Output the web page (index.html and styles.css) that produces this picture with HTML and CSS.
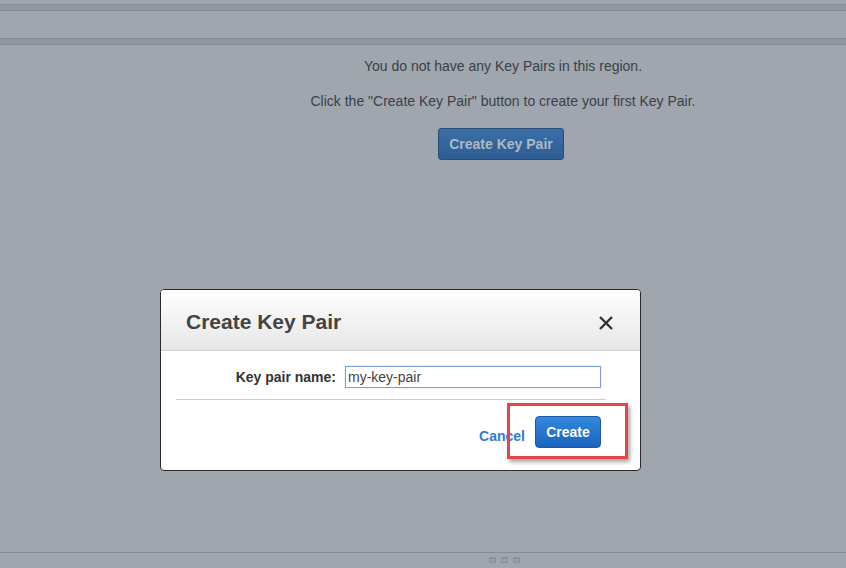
FILE: index.html
```html
<!DOCTYPE html>
<html>
<head>
<meta charset="utf-8">
<link rel="stylesheet" href="styles.css">
</head>
<body>
<div class="page">
  <div class="topgap"></div>
  <div class="band"></div>
  <div class="midgap"></div>
  <div class="band"></div>
  <main class="content">
    <p class="msg first">You do not have any Key Pairs in this region.</p>
    <p class="msg">Click the "Create Key Pair" button to create your first Key Pair.</p>
    <button class="primary-dim">Create Key Pair</button>
  </main>
  <footer class="foot">
    <span class="grip"></span><span class="grip"></span><span class="grip"></span>
  </footer>
</div>

<div class="modal">
  <div class="modal-head">
    <h2 class="modal-title">Create Key Pair</h2>
    <svg class="close" width="14" height="14" viewBox="0 0 14 14"><path d="M1 1L13 13M13 1L1 13" stroke="#333" stroke-width="2.4" fill="none"/></svg>
  </div>
  <div class="modal-body">
    <div class="field">
      <label class="field-label">Key pair name:</label>
      <div class="input">my-key-pair</div>
    </div>
    <div class="sep"></div>
    <div class="actions">
      <a class="cancel">Cancel</a>
      <button class="create">Create</button>
    </div>
  </div>
</div>
<div class="highlight"></div>
</body>
</html>
```

FILE: styles.css
```css
html, body {
  margin: 0;
  padding: 0;
  background: #a0a6ad;
  font-family: "Liberation Sans", Arial, sans-serif;
  width: 846px;
  height: 568px;
  overflow: hidden;
}
.page {
  position: relative;
  height: 568px;
  display: flex;
  flex-direction: column;
}
.topgap { height: 4px; }
.band {
  height: 5px;
  background: #92979f;
  border-top: 1px solid #868b93;
  border-bottom: 1px solid #868b93;
}
.midgap { height: 27px; }
.content {
  margin-left: 160px;
  text-align: center;
  flex: 1;
  padding-top: 13px;
}
.msg {
  margin: 0;
  font-size: 14px;
  color: #3c4047;
  line-height: 17px;
}
.msg.first { margin-bottom: 18px; }
.primary-dim {
  margin-top: 18px;
  margin-right: 4px;
  width: 126px;
  height: 32px;
  border: 1px solid #284e78;
  border-radius: 3px;
  background: linear-gradient(#3a6fa6, #2d5d92);
  color: #aeb8c6;
  font-family: "Liberation Sans", Arial, sans-serif;
  font-weight: bold;
  font-size: 14px;
  padding: 0;
}
.foot {
  border-top: 1px solid #878c94;
  display: flex;
  justify-content: center;
  gap: 5px;
  padding-top: 4px;
  padding-left: 162px;
  box-sizing: border-box;
  height: 16px;
}
.grip {
  width: 5px;
  height: 3px;
  border: 1px solid #8a8f97;
  border-top-width: 2px;
  border-radius: 1px;
  background: #9a9fa7;
}
.modal {
  position: absolute;
  left: 160px;
  top: 289px;
  width: 479px;
  height: 180px;
  background: #fff;
  border: 1px solid #2a2a2a;
  border-radius: 4px;
  overflow: hidden;
}
.modal-head {
  height: 60px;
  background: linear-gradient(#ffffff, #e6e6e6);
  border-bottom: 1px solid #cfcfcf;
  display: flex;
  align-items: center;
  justify-content: space-between;
  padding: 0 27px 0 25px;
}
.modal-title {
  margin: 4px 0 0 0;
  font-size: 21px;
  font-weight: bold;
  color: #444;
}
.close { margin-top: 6px; }
.modal-body {
  padding: 15px 34px 0 15px;
}
.field {
  display: flex;
  align-items: center;
  gap: 9px;
}
.field-label {
  width: 160px;
  text-align: right;
  font-size: 14px;
  font-weight: bold;
  color: #333;
}
.input {
  width: 252px;
  height: 20px;
  border: 1px solid #7c9fdc;
  box-shadow: 0 0 1px #9ab8ea;
  font-size: 14px;
  color: #444;
  padding-left: 2px;
  line-height: 20px;
}
.sep {
  margin-top: 11px;
  height: 1px;
  background: #cccccc;
}
.actions {
  display: flex;
  justify-content: flex-end;
  align-items: center;
  gap: 10px;
  margin-top: 16px;
  padding-right: 5px;
}
.cancel {
  font-size: 14px;
  font-weight: bold;
  color: #2f7bd6;
  margin-top: 8px;
}
.create {
  width: 66px;
  height: 32px;
  border: 1px solid #1a5aa5;
  border-radius: 4px;
  background: linear-gradient(#3388de, #1b63bd);
  color: #fff;
  font-family: "Liberation Sans", Arial, sans-serif;
  font-weight: bold;
  font-size: 14px;
  padding: 0;
}
.highlight {
  position: absolute;
  left: 507px;
  top: 403px;
  width: 115px;
  height: 50px;
  border: 3px solid #e8424c;
  box-shadow: 2px 3px 4px rgba(0,0,0,0.35);
}
```
